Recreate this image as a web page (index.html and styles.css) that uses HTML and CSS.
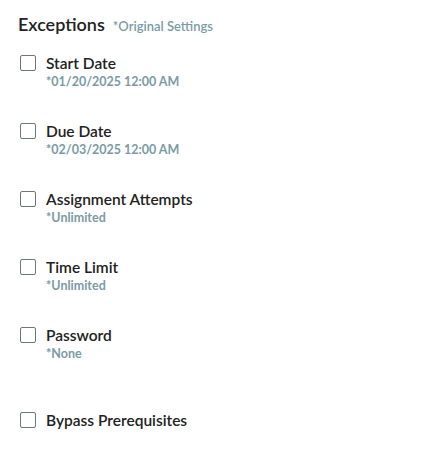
FILE: index.html
```html
<!DOCTYPE html>
<html lang="en">
<head>
    <meta charset="UTF-8">
    <meta name="viewport" content="width=device-width, initial-scale=1.0">
    <title>Exceptions</title>
    <link rel="stylesheet" href="styles.css">
</head>
<body>
    <div class="panel">
        <div class="panel-title">
            <h2>Exceptions</h2>
            <span class="note">*Original Settings</span>
        </div>

        <!-- Opcions d'excepció -->
        <div class="options">
            <label class="option">
                <span class="box"></span>
                <span class="text">
                    <span class="name">Start Date</span>
                    <span class="orig">*01/20/2025 12:00 AM</span>
                </span>
            </label>
            <label class="option">
                <span class="box"></span>
                <span class="text">
                    <span class="name">Due Date</span>
                    <span class="orig">*02/03/2025 12:00 AM</span>
                </span>
            </label>
            <label class="option">
                <span class="box"></span>
                <span class="text">
                    <span class="name">Assignment Attempts</span>
                    <span class="orig">*Unlimited</span>
                </span>
            </label>
            <label class="option">
                <span class="box"></span>
                <span class="text">
                    <span class="name">Time Limit</span>
                    <span class="orig">*Unlimited</span>
                </span>
            </label>
            <label class="option">
                <span class="box"></span>
                <span class="text">
                    <span class="name">Password</span>
                    <span class="orig">*None</span>
                </span>
            </label>
            <label class="option last">
                <span class="box"></span>
                <span class="text">
                    <span class="name">Bypass Prerequisites</span>
                </span>
            </label>
        </div>
    </div>
</body>
</html>
```

FILE: styles.css
```css
body {
    margin: 0;
    font-family: Lato, "Open Sans", sans-serif;
    background-color: #fff;
    color: #222;
}
.panel {
    padding: 13px 18px;
}
.panel-title {
    display: flex;
    align-items: baseline;
    gap: 8px;
}
.panel-title h2 {
    margin: 0;
    font-size: 18px;
    font-weight: 600;
    color: #222;
}
.note {
    font-size: 13px;
    font-weight: 600;
    color: #7a9ba5;
}
.options {
    display: flex;
    flex-direction: column;
    gap: 31px;
    margin-top: 19px;
}
.option {
    display: flex;
    align-items: flex-start;
    gap: 10px;
    padding-left: 2px;
}
.box {
    width: 16px;
    height: 16px;
    box-sizing: border-box;
    border: 1.5px solid #6f7777;
    border-radius: 2px;
    margin-top: 1px;
}
.text {
    display: flex;
    flex-direction: column;
}
.name {
    font-size: 15.5px;
    font-weight: 600;
    line-height: 18px;
}
.orig {
    font-size: 12.5px;
    font-weight: 700;
    color: #7a9ba5;
    line-height: 18px;
    margin-top: 1px;
}
.last {
    margin-top: 17px;
}
```
